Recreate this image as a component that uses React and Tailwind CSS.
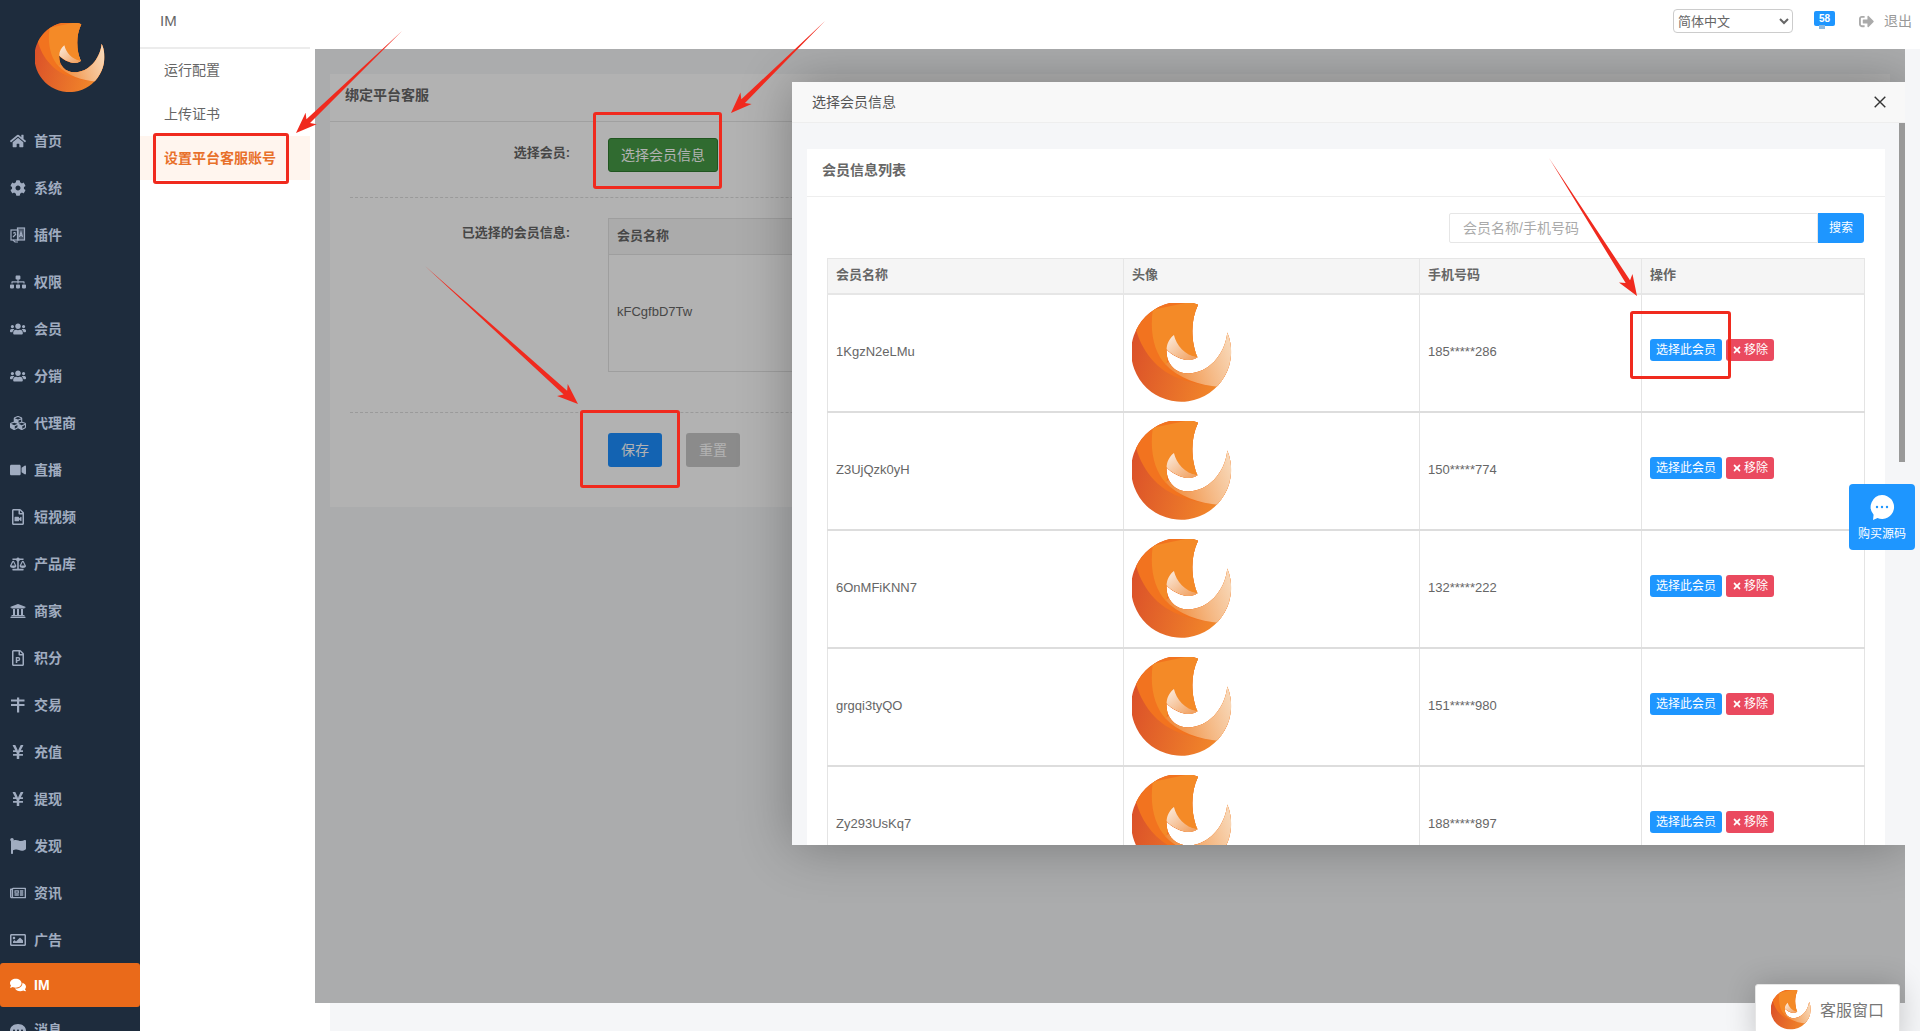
import React from 'react';
import {
  FaHome, FaCog, FaSitemap, FaUsers, FaCubes, FaVideo, FaRegFileVideo, FaBalanceScale, FaUniversity,
  FaRegFilePowerpoint, FaYenSign, FaFlag, FaRegNewspaper, FaRegImage, FaComments, FaCommentDots, FaSignOutAlt, FaTimes,
} from 'react-icons/fa';

function Logo({ className }) {
  const sil = 'M235,45 A149,149 0 1 0 322,128 C315,195 265,250 205,250 C165,250 138,218 141,178 C160,200 205,222 233,202 C215,160 210,95 235,45 Z';
  return (
    <svg viewBox="38 40 298 298" className={className}>
      <defs>
        <clipPath id="logoClip"><path d={sil} /></clipPath>
        <linearGradient id="logoDark" x1="0" y1="0" x2="1" y2="0.25">
          <stop offset="0" stopColor="#d84a29" />
          <stop offset="1" stopColor="#f38a2a" />
        </linearGradient>
        <linearGradient id="logoLight" x1="0" y1="0.6" x2="1" y2="0.3">
          <stop offset="0" stopColor="#f08a3a" />
          <stop offset="0.55" stopColor="#f5b985" />
          <stop offset="1" stopColor="#f8dcbf" />
        </linearGradient>
        <linearGradient id="logoFlame" x1="0" y1="0" x2="1" y2="1">
          <stop offset="0" stopColor="#fcefe3" />
          <stop offset="1" stopColor="#f09a55" />
        </linearGradient>
      </defs>
      <g clipPath="url(#logoClip)">
        <rect x="30" y="30" width="320" height="320" fill="url(#logoDark)" />
        <path d="M50,120 C70,190 120,255 210,275 C250,285 280,288 300,290 L345,200 L345,30 L50,30 Z" fill="#f2731f" />
        <path d="M135,220 C175,265 240,285 298,290 L345,200 L345,110 L200,200 Z" fill="url(#logoLight)" />
        <path d="M100,60 C90,130 105,190 140,225 L150,180 L240,205 L245,30 Z" fill="#f48a27" />
        <path d="M163,135 C150,145 142,160 141,178 C160,200 205,222 233,202 C195,195 170,165 163,135 Z" fill="url(#logoFlame)" />
      </g>
    </svg>
  );
}

const Trans = (p) => (
  <svg viewBox="0 0 16 16" {...p} fill="none" stroke="currentColor" strokeWidth="1.2">
    <rect x="1" y="3" width="7" height="10" />
    <rect x="7.5" y="1" width="7" height="12" fill="currentColor" fillOpacity="0.35" />
    <path d="M3 6h3M4.5 5v1M3 10l3-3M9.5 10l1.5-5 1.5 5M10 8.5h2.2" />
    <path d="M3 13l2 2h3" />
  </svg>
);
const Money = (p) => (
  <svg viewBox="0 0 16 16" {...p} fill="currentColor">
    <rect x="1" y="2.5" width="13.5" height="2" />
    <rect x="1" y="7" width="13.5" height="2" />
    <rect x="7" y="0.5" width="2.2" height="15" />
  </svg>
);

const nav = [
  ['首页', FaHome], ['系统', FaCog], ['插件', Trans], ['权限', FaSitemap], ['会员', FaUsers], ['分销', FaUsers],
  ['代理商', FaCubes], ['直播', FaVideo], ['短视频', FaRegFileVideo], ['产品库', FaBalanceScale], ['商家', FaUniversity],
  ['积分', FaRegFilePowerpoint], ['交易', Money], ['充值', FaYenSign], ['提现', FaYenSign], ['发现', FaFlag],
  ['资讯', FaRegNewspaper], ['广告', FaRegImage], ['IM', FaComments], ['消息', FaCommentDots],
];

const rows = [
  ['1KgzN2eLMu', '185*****286'],
  ['Z3UjQzk0yH', '150*****774'],
  ['6OnMFiKNN7', '132*****222'],
  ['grgqi3tyQO', '151*****980'],
  ['Zy293UsKq7', '188*****897'],
];

function arrowPts(x1, y1, x2, y2) {
  const L = Math.hypot(x2 - x1, y2 - y1);
  const ux = (x2 - x1) / L, uy = (y2 - y1) / L;
  const nx = -uy, ny = ux;
  const p = (d, w) => `${x1 + ux * d + nx * w},${y1 + uy * d + ny * w}`;
  return [p(0, 0), p(L - 17, 2.6), p(L - 21, 8), p(L, 0), p(L - 21, -8), p(L - 17, -2.6)].join(' ');
}

const arrows = [
  [402, 31, 296, 133],
  [825, 21, 731, 113],
  [425, 266, 578, 404],
  [1549, 158, 1637, 296],
];

export default function App() {
  return (
    <div className="relative flex h-[1031px] w-[1920px] overflow-hidden bg-[#f5f6f8] [font-family:'Liberation_Sans','Noto_Sans_CJK_SC',sans-serif]">
      <aside className="h-full w-[140px] shrink-0 overflow-hidden bg-[#1e2c3d]">
        <div className="flex h-[117.5px] justify-center pt-[23px]">
          <Logo className="h-[70px] w-[70px]" />
        </div>
        {nav.map(([label, Icon]) => {
          const active = label === 'IM';
          return (
            <div
              key={label}
              className={active
                ? '-mt-[0.5px] flex h-[44px] items-center rounded-[3px] bg-[#ea6a1a] pl-[10px] text-[14px] font-bold text-white'
                : 'flex h-[47px] items-center pl-[10px] text-[14px] font-bold text-[#a0acc0]'}
            >
              <span className="flex w-[24px] shrink-0 items-center">
                <Icon className="h-[16px] w-[16px]" />
              </span>
              <span>{label}</span>
            </div>
          );
        })}
      </aside>

      <div className="flex min-w-0 flex-1 flex-col">
        <header className="h-[49px] shrink-0 bg-white">
          <div className="flex h-[47px] items-center pl-[20px] pb-[5px] text-[#666]">
            <span className="text-[15px]">IM</span>
            <div className="ml-auto flex items-center">
              <select className="h-[24px] w-[120px] rounded-[4px] border border-[#ccc] bg-white text-[13px] text-[#666]">
                <option>简体中文</option>
              </select>
              <div className="relative ml-[21px] flex h-[15px] w-[21px] -translate-y-[3px] items-center justify-center rounded-[2px] bg-[#1e96ff] text-[10px] font-bold text-white">
                58
                <span className="absolute -bottom-[3px] left-[5px] h-[4px] w-[6px] bg-[#8ab8e0]" />
              </div>
              <FaSignOutAlt className="ml-[24px] h-[15px] w-[15px] text-[#aaa]" />
              <span className="ml-[10px] mr-[8px] text-[14px] text-[#999]">退出</span>
            </div>
          </div>
          <div className="h-[2px] w-[170px] bg-[#ececec]" />
        </header>

        <div className="flex min-h-0 flex-1">
          <nav className="w-[175px] shrink-0 bg-white">
            <div className="w-[170px] text-[14px] text-[#666]">
              <div className="flex h-[43px] items-center pl-[24px]">运行配置</div>
              <div className="flex h-[44px] items-center pl-[24px]">上传证书</div>
              <div className="flex h-[44px] items-center bg-[#fff5ee] pl-[24px] font-bold text-[#e8702a]">设置平台客服账号</div>
            </div>
          </nav>

          <div className="flex min-w-0 flex-1 flex-col">
            <div className="relative h-[954px] w-[1590px] shrink-0 overflow-hidden bg-[#f5f6f8]">
              <div className="mx-[15px] mt-[25px] h-[433px] bg-white text-[#666]">
                <div className="flex h-[48px] items-center border-b border-[#e6e6e6] pb-[4px] pl-[15px] text-[14px] font-bold">绑定平台客服</div>
                <div className="flex h-[75px] items-start pt-[16px]">
                  <div className="w-[240px] text-right text-[13px] font-bold leading-[30px]">选择会员:</div>
                  <div className="ml-[38px] flex h-[34px] w-[110px] items-center justify-center rounded-[3px] border border-[#2f7a2f] bg-[#459a45] text-[14px] text-white">选择会员信息</div>
                </div>
                <div className="mx-[20px] border-b border-dashed border-[#ddd]" />
                <div className="flex h-[214px] pt-[20px]">
                  <div className="w-[240px] pt-[5px] text-right text-[13px] font-bold">已选择的会员信息:</div>
                  <div className="ml-[38px] h-[154px] w-[800px] border border-[#e2e2e2]">
                    <div className="flex h-[36px] items-center border-b border-[#e2e2e2] bg-[#f5f5f5] pb-[2px] pl-[8px] text-[13px] font-bold">会员名称</div>
                    <div className="flex h-[116px] items-center pb-[2px] pl-[8px] text-[13px]">kFCgfbD7Tw</div>
                  </div>
                </div>
                <div className="mx-[20px] border-b border-dashed border-[#ddd]" />
                <div className="ml-[278px] mt-[20px] flex gap-[24px]">
                  <div className="flex h-[34px] w-[54px] items-center justify-center rounded-[3px] bg-[#1c8fff] text-[14px] text-white">保存</div>
                  <div className="flex h-[34px] w-[54px] items-center justify-center rounded-[3px] bg-[#c8c8c8] text-[14px] text-white">重置</div>
                </div>
              </div>

              <div className="absolute inset-0 bg-black/30" />

              <div className="absolute left-[477px] top-[33px] flex h-[763px] w-[1113px] flex-col overflow-hidden bg-[#f5f6f8] shadow-[1px_1px_50px_rgba(0,0,0,0.3)]">
                <div className="flex h-[41px] shrink-0 items-center justify-between border-b border-[#eee] bg-[#f8f8f8] pl-[20px] pr-[19px] text-[14px] text-[#555]">
                  <span>选择会员信息</span>
                  <svg viewBox="0 0 12 12" className="h-[12px] w-[12px]" stroke="#333" strokeWidth="1.4">
                    <path d="M0.7 0.7l10.6 10.6M11.3 0.7L0.7 11.3" />
                  </svg>
                </div>
                <div className="relative min-h-0 flex-1 overflow-hidden pl-[15px] pr-[20px] pt-[26px]">
                  <div className="absolute right-0 top-0 h-[339px] w-[6px] bg-[#999]" />
                  <div className="bg-white pb-[20px]">
                    <div className="flex h-[48px] items-center border-b border-[#eee] pb-[4px] pl-[15px] text-[14px] font-bold text-[#666]">会员信息列表</div>
                    <div className="pl-[20px] pr-[21px] pt-[16px]">
                      <div className="flex justify-end">
                        <input
                          readOnly
                          placeholder="会员名称/手机号码"
                          className="h-[30px] w-[369px] rounded-l-[2px] border border-[#e6e6e6] pl-[13px] text-[14px] outline-none placeholder:text-[#aaa]"
                        />
                        <div className="flex h-[30px] w-[46px] items-center justify-center rounded-r-[3px] bg-[#1e96ff] text-[12px] text-white">搜索</div>
                      </div>
                      <table className="mt-[15px] w-[1037px] table-fixed border-collapse text-[13px] text-[#666]">
                        <colgroup>
                          <col className="w-[296px]" />
                          <col className="w-[296px]" />
                          <col className="w-[222px]" />
                          <col className="w-[223px]" />
                        </colgroup>
                        <thead>
                          <tr className="h-[35px] bg-[#f5f5f5]">
                            {['会员名称', '头像', '手机号码', '操作'].map((h) => (
                              <th key={h} className="border border-b-2 border-[#e6e6e6] pb-[2px] pl-[8px] text-left font-bold">{h}</th>
                            ))}
                          </tr>
                        </thead>
                        <tbody>
                          {rows.map(([name, phone]) => (
                            <tr key={name} className="h-[118px]">
                              <td className="border border-b-2 border-[#e4e4e4] border-b-[#ddd] pb-[2px] pl-[8px]">{name}</td>
                              <td className="border border-b-2 border-[#e4e4e4] border-b-[#ddd] pl-[8px]">
                                <Logo className="h-[100px] w-[100px]" />
                              </td>
                              <td className="border border-b-2 border-[#e4e4e4] border-b-[#ddd] pb-[2px] pl-[8px]">{phone}</td>
                              <td className="border border-b-2 border-[#e4e4e4] border-b-[#ddd] pl-[8px]">
                                <div className="flex items-center gap-[4px] pb-[6px]">
                                  <span className="flex h-[22px] w-[72px] items-center justify-center rounded-[3px] bg-[#1e96ff] text-[12px] text-white">选择此会员</span>
                                  <span className="flex h-[22px] w-[48px] items-center justify-center gap-[2px] rounded-[3px] bg-[#ea4a5f] text-[12px] text-white">
                                    <FaTimes className="h-[10px] w-[10px]" />移除
                                  </span>
                                </div>
                              </td>
                            </tr>
                          ))}
                        </tbody>
                      </table>
                    </div>
                  </div>
                </div>
              </div>
            </div>
            <div className="flex min-h-0 flex-1">
              <div className="w-[15px] bg-white" />
            </div>
          </div>
        </div>
      </div>

      {/* floating widgets */}
      <div className="absolute left-[1849px] top-[484px] flex h-[66px] w-[66px] flex-col items-center rounded-[4px] bg-[#1e96ff] pt-[10px] text-[12px] text-white">
        <svg viewBox="0 0 26 26" className="h-[26px] w-[26px]">
          <path d="M13 1a12 12 0 1 1-4.5 23.1L4 26l.6-5.2A12 12 0 0 1 13 1Z" fill="#fff" />
          <circle cx="8" cy="13" r="1.2" fill="#1e96ff" />
          <circle cx="13" cy="13" r="1.2" fill="#1e96ff" />
          <circle cx="18" cy="13" r="1.2" fill="#1e96ff" />
        </svg>
        <span className="mt-[5px]">购买源码</span>
      </div>
      <div className="absolute left-[1755px] top-[984px] flex h-[60px] w-[145px] items-start rounded-t-[3px] border border-[#e6e6e6] bg-white pl-[15px] pt-[5px] shadow-[0_0_30px_rgba(0,0,0,0.2)]">
        <Logo className="h-[40px] w-[40px] shrink-0" />
        <span className="ml-[9px] pt-[9px] text-[16px] text-[#777]">客服窗口</span>
      </div>

      {/* red annotations */}
      <div className="absolute left-[153px] top-[133px] h-[51px] w-[136px] rounded-[3px] border-[3px] border-[#f02a1e]" />
      <div className="absolute left-[593px] top-[112px] h-[77px] w-[129px] rounded-[3px] border-[3px] border-[#f02a1e]" />
      <div className="absolute left-[580px] top-[410px] h-[78px] w-[100px] rounded-[3px] border-[3px] border-[#f02a1e]" />
      <div className="absolute left-[1630px] top-[311px] h-[68px] w-[101px] rounded-[3px] border-[3px] border-[#f02a1e]" />
      <svg className="pointer-events-none absolute left-0 top-0 h-[1031px] w-[1920px]" viewBox="0 0 1920 1031">
        {arrows.map((a, i) => (
          <polygon key={i} points={arrowPts(...a)} fill="#f02a1e" />
        ))}
      </svg>
    </div>
  );
}
